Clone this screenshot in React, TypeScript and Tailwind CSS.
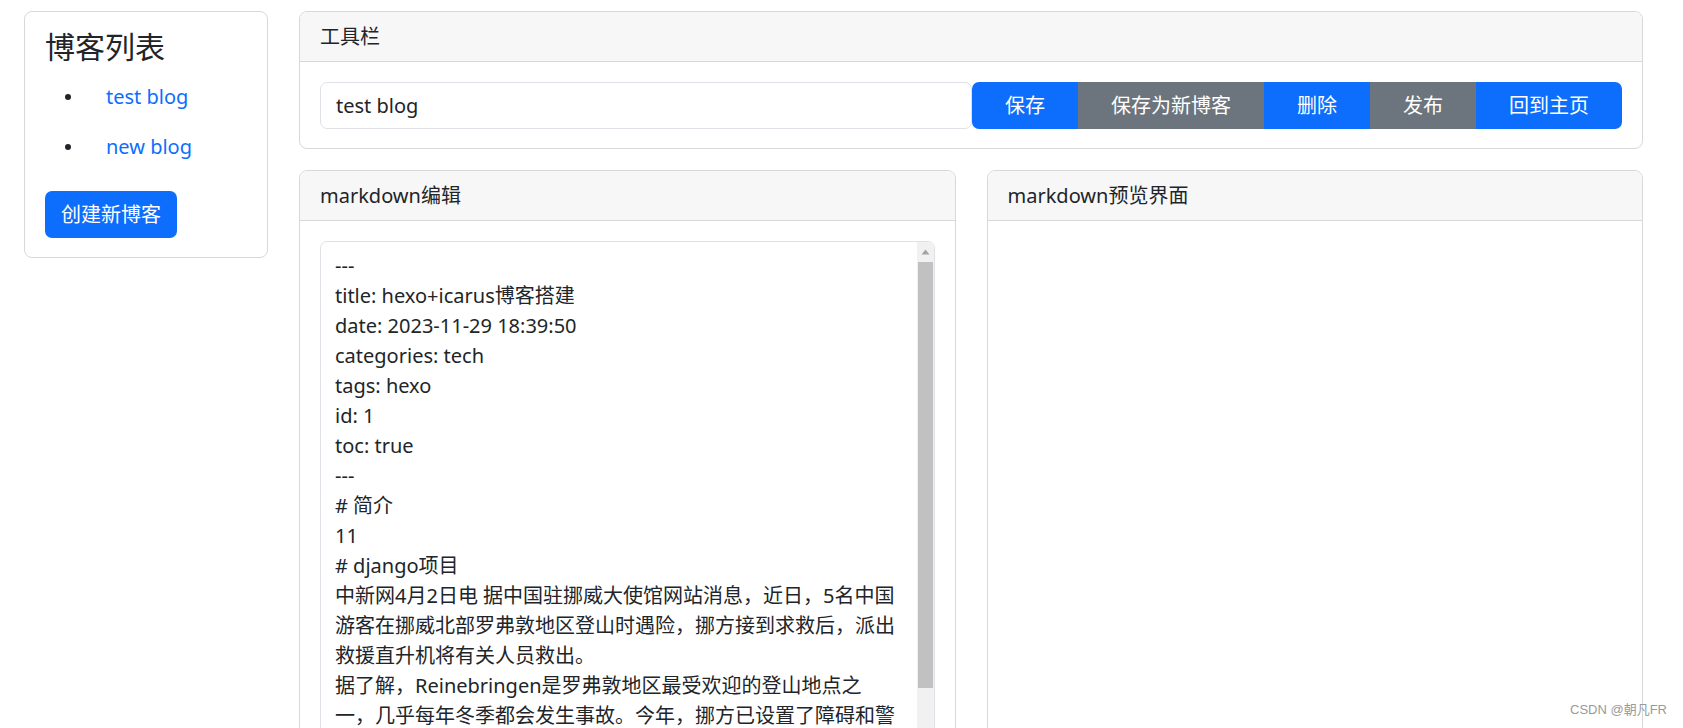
import React from 'react';

const blogs = ['test blog', 'new blog'];

const toolbarButtons = [
  { label: '保存', color: 'bg-[#0d6efd]', extra: 'rounded-l-[7px]' },
  { label: '保存为新博客', color: 'bg-[#6c757d]', extra: '' },
  { label: '删除', color: 'bg-[#0d6efd]', extra: '' },
  { label: '发布', color: 'bg-[#6c757d]', extra: '' },
  { label: '回到主页', color: 'bg-[#0d6efd]', extra: 'rounded-r-[7px]' },
];

// 编辑区里的 markdown 内容（按原图的换行位置）
const markdownLines = [
  '---',
  'title: hexo+icarus博客搭建',
  'date: 2023-11-29 18:39:50',
  'categories: tech',
  'tags: hexo',
  'id: 1',
  'toc: true',
  '---',
  '# 简介',
  '11',
  '# django项目',
  '中新网4月2日电 据中国驻挪威大使馆网站消息，近日，5名中国',
  '游客在挪威北部罗弗敦地区登山时遇险，挪方接到求救后，派出',
  '救援直升机将有关人员救出。',
  '据了解，Reinebringen是罗弗敦地区最受欢迎的登山地点之',
  '一，几乎每年冬季都会发生事故。今年，挪方已设置了障碍和警',
];

function CardHeader({ title }: { title: string }) {
  return (
    <div className="h-[50px] px-[20px] flex items-center bg-[#f7f7f7] border-b border-[#d8d8d8] rounded-t-[7px] text-[20px] leading-[30px]">
      {title}
    </div>
  );
}

function BlogList() {
  return (
    <div className="w-[244px] ml-[24px] shrink-0 self-start border border-[#d8d8d8] rounded-[8px] px-[20px] pt-[20px] pb-[19px]">
      <h4 className="text-[30px] leading-[30px] font-normal mb-[10px]">博客列表</h4>
      <ul className="mb-[19px]">
        {blogs.map(blog => (
          <li key={blog} className="h-[50px] flex items-center">
            <span className="w-[6px] h-[6px] rounded-full bg-[#212529] ml-[20px] mr-[35px]" />
            <a href="#" className="text-[#0d6efd] text-[20px] leading-[30px]">{blog}</a>
          </li>
        ))}
      </ul>
      <button className="h-[47px] px-[16px] bg-[#0d6efd] text-white text-[20px] rounded-[7px]">
        创建新博客
      </button>
    </div>
  );
}

function Toolbar() {
  return (
    <div className="border border-[#d8d8d8] rounded-[8px]">
      <CardHeader title="工具栏" />
      <div className="p-[20px] pb-[19px] flex">
        <input
          defaultValue="test blog"
          className="flex-1 h-[47px] px-[15px] border border-[#dee2e6] rounded-[7px] text-[20px] text-[#212529] outline-none"
        />
        <div className="flex">
          {toolbarButtons.map(btn => (
            <button
              key={btn.label}
              className={`h-[47px] px-[33px] text-white text-[20px] ${btn.color} ${btn.extra}`}
            >
              {btn.label}
            </button>
          ))}
        </div>
      </div>
    </div>
  );
}

function FakeScrollbar() {
  return (
    <div className="w-[17px] shrink-0 bg-[#f1f1f1] flex flex-col rounded-tr-[6px]">
      <div className="h-[20px] flex items-center justify-center">
        <svg width="9" height="6" viewBox="0 0 9 6">
          <path d="M4.5 0.5 L8.5 5.5 L0.5 5.5 Z" fill="#a3a3a3" />
        </svg>
      </div>
      <div className="h-[426px] mx-[1px] bg-[#c1c1c1]" />
    </div>
  );
}

function MarkdownEditor() {
  return (
    <div className="flex-1 border border-[#d8d8d8] rounded-[8px]">
      <CardHeader title="markdown编辑" />
      <div className="p-[20px]">
        <div className="h-[600px] flex border border-[#dee2e6] rounded-[7px] overflow-hidden">
          <div className="flex-1 pl-[14px] pt-[9px] text-[20px] leading-[30px] text-[#212529] overflow-hidden">
            {markdownLines.map((line, i) => (
              <div key={i} className="whitespace-pre">{line}</div>
            ))}
          </div>
          <FakeScrollbar />
        </div>
      </div>
    </div>
  );
}

function MarkdownPreview() {
  return (
    <div className="flex-1 border border-[#d8d8d8] rounded-[8px]">
      <CardHeader title="markdown预览界面" />
      <div className="p-[20px]" />
    </div>
  );
}

export default function App() {
  return (
    <div
      className="relative h-[728px] overflow-hidden bg-white text-[#212529]"
      style={{ fontFamily: '"Noto Sans", "Noto Sans CJK SC", sans-serif' }}
    >
      <div className="flex gap-[31px] pt-[11px]">
        <BlogList />
        <div className="w-[1344px] flex flex-col gap-[21px]">
          <Toolbar />
          <div className="flex gap-[31px]">
            <MarkdownEditor />
            <MarkdownPreview />
          </div>
        </div>
      </div>

      {/* 水印 */}
      <div
        className="absolute right-[16px] bottom-[9px] text-[13px] text-[#9a9a9a]"
        style={{ fontFamily: '"Liberation Sans", "Noto Sans CJK SC", sans-serif' }}
      >
        CSDN @朝凡FR
      </div>
    </div>
  );
}
